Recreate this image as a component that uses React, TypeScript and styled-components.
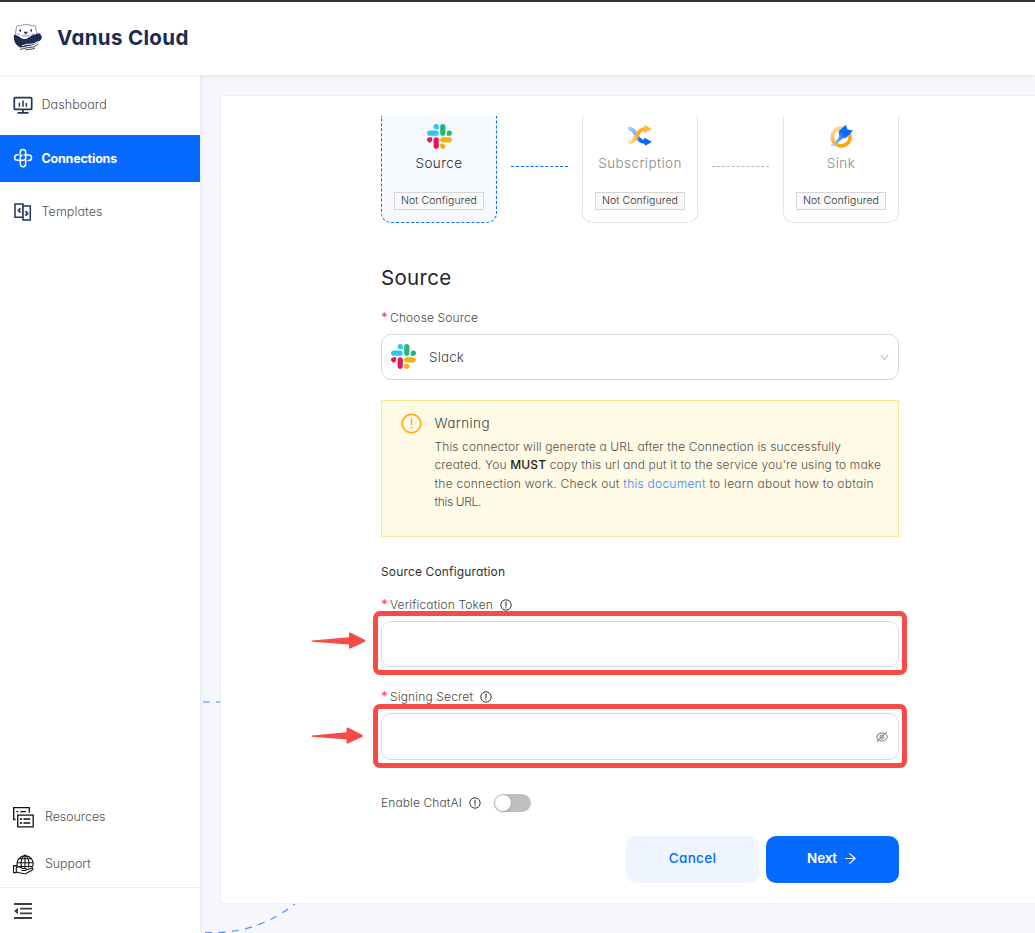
import React from 'react';
import styled, { createGlobalStyle, css } from 'styled-components';
import {
  AiOutlineArrowRight,
  AiOutlineDown,
  AiOutlineExclamationCircle,
  AiOutlineEyeInvisible,
} from 'react-icons/ai';

const GlobalStyle = createGlobalStyle`
  *, *::before, *::after { box-sizing: border-box; }
  html, body { margin: 0; height: 100%; }
  body {
    background: #f5f7fc;
    font-family: Inter, 'Open Sans', sans-serif;
    font-feature-settings: 'cv11', 'ss03';
    font-weight: 360;
    color: #4a4a4a;
    overflow: hidden;
  }
  button { font: inherit; font-feature-settings: inherit; }
  svg { display: block; flex: none; }
`;

const Page = styled.div`
  display: flex;
  flex-direction: column;
  height: 933px;
`;

const Header = styled.header`
  display: flex;
  align-items: center;
  gap: 14px;
  flex: none;
  height: 75px;
  padding: 0 0 2px 13px;
  border-top: 2px solid #343238;
  background: #fff;
  box-shadow: 0 1px 4px rgba(20, 40, 90, 0.09);
  z-index: 2;

  svg {
    margin-top: -1px;
  }
`;

const Brand = styled.h1`
  margin: 0;
  font-size: 20.5px;
  font-weight: 680;
  line-height: 30px;
  letter-spacing: 0.35px;
  color: #1b2c50;
`;

const Body = styled.div`
  display: flex;
  flex: 1;
  min-height: 0;
`;

const Sidebar = styled.nav`
  display: flex;
  flex-direction: column;
  flex: none;
  width: 200px;
  padding-top: 6px;
  background: #fff;
  box-shadow: 1px 0 4px rgba(20, 40, 90, 0.08);
  z-index: 1;
`;

const NavItem = styled.a<{ $active?: boolean; $footer?: boolean }>`
  display: flex;
  align-items: center;
  gap: ${(p) => (p.$footer ? 11 : 8.5)}px;
  height: 47px;
  padding-left: 13px;
  margin-bottom: ${(p) => (p.$footer ? 0 : p.$active ? 6 : 7)}px;
  font-size: 12.5px;
  letter-spacing: ${(p) => (p.$footer ? -0.08 : 0.08)}px;
  color: #505050;
  ${(p) =>
    p.$active &&
    css`
      padding-bottom: 1px;
      background: #076aff;
      color: #fff;
      font-weight: 700;
      letter-spacing: -0.2px;
    `}
  ${(p) =>
    p.$footer &&
    css`
      svg {
        margin-top: 2px;
      }
    `}
`;

const Spacer = styled.div`
  flex: 1;
`;

const Collapse = styled.div`
  display: flex;
  align-items: center;
  height: 46px;
  padding-left: 14px;
  border-top: 1px solid #ececee;
`;

const Main = styled.main`
  position: relative;
  flex: 1;
  padding: 20px 0 29px 20px;
  background: #f5f7fc;
`;

const Backdrop = styled.svg`
  position: absolute;
  left: 0;
  top: 0;
`;

const Panel = styled.section`
  position: relative;
  height: 809px;
  padding: 20px 0 0 160px;
  border: 1px solid #eeeff2;
  border-right: 0;
  background: #fff;
`;

const Form = styled.div`
  display: flex;
  flex-direction: column;
  width: 518px;
`;

const Steps = styled.div`
  display: flex;
  align-items: flex-start;
  justify-content: space-between;
`;

const StepCard = styled.div<{ $active?: boolean }>`
  display: flex;
  flex-direction: column;
  align-items: center;
  width: 116px;
  height: 107px;
  padding-top: 8px;
  border: 1px ${(p) => (p.$active ? 'dashed #076aff' : 'solid #e6e6e6')};
  border-top: 0;
  border-radius: 0 0 10px 10px;
  background: ${(p) => (p.$active ? '#f6faff' : '#fff')};
`;

const StepName = styled.div<{ $active?: boolean }>`
  margin-top: 4px;
  font-size: 13.5px;
  line-height: 20px;
  letter-spacing: 0.42px;
  color: ${(p) => (p.$active ? '#2b2b2b' : '#888')};
`;

const Tag = styled.div`
  margin-top: 19px;
  width: 90px;
  height: 18px;
  border: 1px solid #d6d6d6;
  background: #fafafa;
  font-size: 10.5px;
  line-height: 16px;
  letter-spacing: 0.08px;
  text-align: center;
  white-space: nowrap;
  color: #2e2e2e;
`;

const StepLink = styled.div<{ $active?: boolean }>`
  width: 57px;
  margin: 50px 1px 0 0;
  border-top: 1px dashed ${(p) => (p.$active ? '#076aff' : '#b5b5b5')};
`;

const Title = styled.h2`
  margin: 35px 0 0;
  font-size: 20.5px;
  font-weight: 400;
  line-height: 40px;
  letter-spacing: 0.3px;
  color: #262626;
`;

const FieldLabel = styled.label<{ $top: number; $spacing?: number }>`
  display: flex;
  align-items: center;
  height: 20px;
  padding-bottom: 2px;
  margin-top: ${(p) => p.$top}px;
  font-size: 12px;
  letter-spacing: ${(p) => p.$spacing ?? 0.15}px;
  color: #484848;

  svg {
    margin: 2px 0 0 7px;
  }
`;

const Required = styled.span`
  width: 9px;
  font-size: 13px;
  font-weight: 500;
  letter-spacing: 0;
  color: #ff4d4f;
`;

const Box = styled.div<{ $height?: number }>`
  position: relative;
  display: flex;
  align-items: center;
  height: ${(p) => p.$height ?? 46}px;
  margin-top: 6px;
  border: 1px solid #d9d9d9;
  border-radius: 10px;
  background: #fff;
`;

const Select = styled(Box)`
  padding: 0 8px 2px 9px;
  gap: 13px;
  font-size: 13.5px;
  letter-spacing: 0.12px;
  color: #404040;

  span {
    flex: 1;
    padding-top: 2px;
  }
  svg:last-child {
    margin-top: 2px;
  }
`;

const SecretBox = styled(Box)`
  justify-content: flex-end;
  padding: 0 9px 0 0;
  color: #7c7c7c;
`;

const Highlight = styled.div<{ $top: number }>`
  position: absolute;
  top: ${(p) => p.$top}px;
  left: -9px;
  width: 534px;
  height: 64px;
  border: 5px solid #f84a46;
  border-radius: 7px;
`;

const Arrow = styled.svg<{ $top: number }>`
  position: absolute;
  left: -71px;
  top: ${(p) => p.$top}px;
`;

const Alert = styled.div`
  display: flex;
  height: 137px;
  margin-top: 20px;
  padding: 11px 0 0 18px;
  gap: 11.5px;
  border: 1px solid #ffe58f;
  background: #fffae6;
`;

const AlertTitle = styled.div`
  font-size: 13.5px;
  line-height: 22px;
  letter-spacing: 0.4px;
  color: #403f3a;
`;

const AlertText = styled.div`
  margin-top: 4px;
  font-size: 12px;
  line-height: 18.4px;
  color: #54524c;
  white-space: nowrap;

  strong {
    font-weight: 450;
    color: #1f1e1b;
  }
  a {
    color: #1a8bff;
  }
`;

const Line = styled.div<{ $spacing: number }>`
  letter-spacing: ${(p) => p.$spacing}px;
`;

const SubTitle = styled.div`
  margin-top: 25px;
  font-size: 12px;
  font-weight: 400;
  line-height: 20px;
  letter-spacing: 0.15px;
  color: #303030;
`;

const Toggle = styled.span`
  width: 37px;
  height: 18px;
  margin: 2px 0 0 13px;
  padding: 1px;
  border-radius: 9px;
  background: #bfbfbf;

  &::after {
    content: '';
    display: block;
    width: 16px;
    height: 16px;
    border-radius: 50%;
    background: #fff;
    box-shadow: 0 1px 3px rgba(0, 0, 0, 0.2);
  }
`;

const Actions = styled.div`
  display: flex;
  justify-content: flex-end;
  gap: 7px;
  margin-top: 23px;
`;

const Button = styled.button<{ $primary?: boolean }>`
  display: flex;
  align-items: center;
  justify-content: center;
  gap: 6px;
  width: 133px;
  height: 47px;
  padding: 0 0 3px;
  border: 0;
  border-radius: 10px;
  background: ${(p) => (p.$primary ? '#076aff' : '#eef5ff')};
  color: ${(p) => (p.$primary ? '#fff' : '#076aff')};
  font-size: 13.5px;
  font-weight: ${(p) => (p.$primary ? 600 : 500)};
  letter-spacing: ${(p) => (p.$primary ? -0.2 : 0.3)}px;
`;

const OtterLogo = () => (
  <svg width="30" height="28" viewBox="0 0 30 28">
    <path d="M1.200 11.500C0 16 1.500 21.500 7 24.400c5 .6 12-1 18.300-5.700 2.200-1 3.700-2.700 3.500-4.600-.3-2.200-2.600-4.400-4.300-3.600L20 15H8Z" fill="#1b2c50" />
    <path d="M3.400 5.600C2.500 3.400 4.300 2 6.300 3c4.500-1.900 9.700-1.900 13.700 0 2-1 3.600.6 2.700 2.800 1.200 3.500 1.200 6.600-.6 9.200-4 3.700-14 3.700-18 0-1.900-2.800-1.900-6-.7-9.400Z" fill="#fff" stroke="#68758e" strokeWidth="0.8" />
    <path d="M10.700 8.700h4.200l-1 2h-2.200Z" fill="#1b2c50" />
    <ellipse cx="7.200" cy="7.500" rx="0.900" ry="1.200" fill="#1b2c50" />
    <ellipse cx="18.200" cy="7.500" rx="0.900" ry="1.200" fill="#1b2c50" />
    <path d="M12.800 10.500v1.700M8.500 12.300c2 1 6 1 8.200 0M4.500 11l2.500.4M18.500 11.300l2.500-.4" stroke="#68758e" strokeWidth="0.8" fill="none" />
    <path d="M1.500 12.500c1.500-.8 4.500.7 6.500 2.600 2 1.200 5 1.200 7-.1 2.500-2.200 6-3.700 9-4l2 4-6 5-16 1Z" fill="#1b2c50" />
    <path d="M9 22.800c3-.6 5-2 8-1.600 3 .4 6-1.600 8.500-2.900M8 25.300c4 .2 6-2.500 9.500-2 3 .3 5.500-1 7.500-2.700" stroke="#fff" strokeWidth="1" fill="none" />
    <path d="M7 26.300c4.500-.2 6.500-2.200 10-1.900 3.500 0 6-1.300 8.500-3.800M12.500 27c3.500-1.400 6.500 0 9.500-2" stroke="#1b2c50" strokeWidth="0.900" fill="none" />
  </svg>
);

const DashboardIcon = () => (
  <svg width="20" height="18" viewBox="0 0 20 18" fill="none" stroke="#22345a">
    <rect x="1.300" y="1.600" width="17.400" height="11.800" rx="1" strokeWidth="1.700" />
    <path d="M10 13.400v3M4.500 16.900h11" strokeWidth="1.600" />
    <path d="M6.400 6.700v4M10 4.500v6.200M13.400 7v3.700" strokeWidth="1.500" />
  </svg>
);

const ConnectionsIcon = () => (
  <svg width="20" height="20" viewBox="0 0 20 20" fill="none" stroke="#fff" strokeWidth="1.500">
    <path d="M7.300 8V4.200a2.700 2.700 0 0 1 5.400 0v5.900a2.200 2.200 0 0 1-2.200 2.200H4.400a2.750 2.750 0 0 1 0-5.500h1.300" />
    <path d="M12.700 11.800V16a2.700 2.700 0 0 1-5.400 0V9.500a2.200 2.200 0 0 1 2-2.200" />
    <path d="M10.500 6.900h5.300a2.750 2.750 0 0 1 0 5.500h-1.300" />
  </svg>
);

const TemplatesIcon = () => (
  <svg width="20" height="20" viewBox="0 0 20 20" fill="none" stroke="#22345a" strokeWidth="1.500">
    <path d="M10 15.300H2V2h8Z" />
    <path d="M10 3.900h7.300v14H10Z" fill="#fff" />
    <path d="M7.500 6.300 5.400 8.500l2.100 2.200M12.500 9.200l2.100 2.200-2.100 2.200" strokeWidth="1.700" />
  </svg>
);

const ResourcesIcon = () => (
  <svg width="21" height="21" viewBox="0 0 21 21" fill="none" stroke="#111">
    <path d="M2.500 12.500H.7V.7h15.600v5" strokeWidth="1.300" />
    <path d="M4.700 8.100h15.500v11.800H4.700Z" strokeWidth="1.300" />
    <path d="M3.300 4.600h2M7.300 4.600H13M6.800 12h2.400M10.500 12h6.700M6.800 16h2.400M10.500 16h6.700" strokeWidth="1.300" />
  </svg>
);

const SupportIcon = () => (
  <svg width="21" height="21" viewBox="0 0 21 21" fill="none" stroke="#111" strokeWidth="1.100">
    <path d="M4.600 12.500A8 8 0 1 1 19 13.800M12 1v13M4.200 8.700h15.900M5.600 4.800h13M6 12.500h13" />
    <path d="M8.800 13.500C7.200 9.500 8 3.200 12 1c4 2.200 4.800 8.500 3.200 12.500" />
    <path d="M.6 11.600h2.700v7H.6ZM3.300 13.200c3-1 4.500.1 6 1.300h3c1.500.2 1.500 1.900 0 2H8.500M12.800 16l5.500-1.700c1.600-.2 2.200 1 1 1.800L13 19.500c-2.500 1-5-.7-9.700-1.500" fill="#fff" />
  </svg>
);

const CollapseIcon = () => (
  <svg width="18" height="16" viewBox="0 0 18 16" fill="#3d3d3d">
    <path d="M0 0h18v1.900H0zM6 4.700h12v1.900H6zM6 9.400h12v1.900H6zM0 14.100h18V16H0zM0 8l4-3.200v6.400z" />
  </svg>
);

const SlackLogo = () => (
  <svg width="25" height="25" viewBox="0 0 122.8 122.8">
    <path fill="#e4175b" d="M25.800 77.600c0 7.100-5.800 12.900-12.900 12.900S0 84.700 0 77.600s5.800-12.900 12.900-12.900h12.900v12.900zM32.300 77.600c0-7.100 5.800-12.900 12.900-12.900s12.900 5.800 12.900 12.900v32.300c0 7.100-5.800 12.900-12.900 12.900s-12.900-5.800-12.900-12.900V77.600z" />
    <path fill="#2fc6f5" d="M45.200 25.800c-7.100 0-12.900-5.800-12.900-12.900S38.100 0 45.200 0s12.900 5.800 12.900 12.900v12.900H45.200zM45.200 32.300c7.100 0 12.900 5.800 12.900 12.900s-5.800 12.900-12.900 12.900H12.900C5.800 58.100 0 52.300 0 45.200s5.800-12.900 12.900-12.900h32.300z" />
    <path fill="#23b67c" d="M97 45.200c0-7.100 5.800-12.900 12.900-12.900s12.900 5.800 12.900 12.900-5.800 12.900-12.900 12.900H97V45.200zM90.500 45.200c0 7.100-5.800 12.900-12.900 12.900s-12.900-5.800-12.900-12.900V12.900C64.700 5.800 70.500 0 77.600 0s12.900 5.800 12.900 12.900v32.300z" />
    <path fill="#eeb211" d="M77.600 97c7.100 0 12.900 5.800 12.900 12.900s-5.800 12.900-12.900 12.900-12.900-5.800-12.900-12.900V97h12.900zM77.600 90.500c-7.100 0-12.900-5.800-12.900-12.900s5.800-12.900 12.900-12.900h32.300c7.100 0 12.900 5.800 12.900 12.900s-5.800 12.900-12.900 12.900H77.600z" />
  </svg>
);

const ShuffleIcon = () => (
  <svg width="26" height="25" viewBox="0 0 26 25" fill="none">
    <defs>
      <linearGradient id="blue" x1="1" y1="4" x2="19" y2="18" gradientUnits="userSpaceOnUse">
        <stop stopColor="#a9cbff" />
        <stop offset="0.45" stopColor="#7baeff" />
        <stop offset="0.8" stopColor="#076aff" />
      </linearGradient>
      <linearGradient id="amber" x1="1" y1="19" x2="20" y2="4" gradientUnits="userSpaceOnUse">
        <stop stopColor="#ffe6b0" />
        <stop offset="0.55" stopColor="#ffa910" />
        <stop offset="1" stopColor="#ffb83f" />
      </linearGradient>
    </defs>
    <path d="M1.300 4.500c9 0 7 13.500 17 13.500" stroke="url(#blue)" strokeWidth="4" />
    <path d="m17 13.500 8 4.200-7 4.300Z" fill="#076aff" />
    <path d="M1.300 18.500c10 0 7-13.500 17-13.500" stroke="url(#amber)" strokeWidth="4" />
    <path d="m17.500.8 7.500 4.100-7.500 4.300Z" fill="#ffb83f" />
  </svg>
);

const SinkIcon = () => (
  <svg width="25" height="25" viewBox="0 0 25 25" fill="none">
    <defs>
      <linearGradient id="ring" x1="5" y1="3" x2="18" y2="22" gradientUnits="userSpaceOnUse">
        <stop stopColor="#ffe0a0" />
        <stop offset="0.6" stopColor="#ffaf1c" />
        <stop offset="1" stopColor="#ff9f00" />
      </linearGradient>
      <linearGradient id="bolt" x1="3" y1="22" x2="15" y2="9" gradientUnits="userSpaceOnUse">
        <stop stopColor="#b5d2ff" />
        <stop offset="1" stopColor="#076aff" />
      </linearGradient>
    </defs>
    <circle cx="12.200" cy="13" r="8.900" stroke="url(#ring)" strokeWidth="3.600" />
    <path d="m2 20.300 2 .1L10.200 13l-.6-5.700L17 .8l1.200 5 5.800.5-6.300 7.300-4 .9L5.700 21.300l-.5 1.500-1.200-1-2 1Z" fill="url(#bolt)" />
  </svg>
);

const HintIcon = () => (
  <svg width="12" height="12" viewBox="0 0 12 12" fill="none" stroke="#1f1f1f">
    <circle cx="6" cy="6" r="5.200" strokeWidth="0.900" />
    <path d="M6 2.700v4.800M6 8.300v1" strokeWidth="1" />
  </svg>
);

const PointerArrow = ({ length, top }: { length: number; top: number }) => (
  <Arrow $top={top} width="56" height="20" viewBox="0 0 56 20">
    <path
      d={`M1 9.600 ${length - 16.5} 6.300V2.600q.2-1.800 1.800-.9L${length - 0.5} 9q1 1 0 1.800l-14.600 6.700q-1.400.6-1.400-.9v-3.200L1 10.800Q0 10 1 9.600Z`}
      fill="#f84a46"
    />
  </Arrow>
);

export default function App() {
  return (
    <Page>
      <GlobalStyle />
      <Header>
        <OtterLogo />
        <Brand>Vanus Cloud</Brand>
      </Header>
      <Body>
        <Sidebar>
          <NavItem><DashboardIcon />Dashboard</NavItem>
          <NavItem $active><ConnectionsIcon />Connections</NavItem>
          <NavItem><TemplatesIcon />Templates</NavItem>
          <Spacer />
          <NavItem $footer><ResourcesIcon />Resources</NavItem>
          <NavItem $footer><SupportIcon />Support</NavItem>
          <Collapse><CollapseIcon /></Collapse>
        </Sidebar>
        <Main>
          <Backdrop width="835" height="858" fill="none" stroke="#4a90ff" strokeWidth="1.2">
            <path d="M3 627H20" strokeDasharray="7 6" />
            <path d="M5 857.500C38 859 66 851 95 829" strokeDasharray="7 6.5" />
          </Backdrop>
          <Panel>
            <Form>
              <Steps>
                <StepCard $active>
                  <SlackLogo />
                  <StepName $active>Source</StepName>
                  <Tag>Not Configured</Tag>
                </StepCard>
                <StepLink $active />
                <StepCard>
                  <ShuffleIcon />
                  <StepName>Subscription</StepName>
                  <Tag>Not Configured</Tag>
                </StepCard>
                <StepLink />
                <StepCard>
                  <SinkIcon />
                  <StepName>Sink</StepName>
                  <Tag>Not Configured</Tag>
                </StepCard>
              </Steps>

              <Title>Source</Title>
              <FieldLabel $top={10}><Required>*</Required>Choose Source</FieldLabel>
              <Select>
                <SlackLogo />
                <span>Slack</span>
                <AiOutlineDown size={11} color="#b3b3b3" />
              </Select>

              <Alert>
                <AiOutlineExclamationCircle size={23} color="#faad14" />
                <div>
                  <AlertTitle>Warning</AlertTitle>
                  <AlertText>
                    <Line $spacing={0.11}>This connector will generate a URL after the Connection is successfully</Line>
                    <Line $spacing={0.13}>created. You <strong>MUST</strong> copy this url and put it to the service you're using to make</Line>
                    <Line $spacing={0.25}>the connection work. Check out <a>this document</a> to learn about how to obtain</Line>
                    <Line $spacing={-0.35}>this URL.</Line>
                  </AlertText>
                </div>
              </Alert>

              <SubTitle>Source Configuration</SubTitle>
              <FieldLabel $top={13}><Required>*</Required>Verification Token<HintIcon /></FieldLabel>
              <Box>
                <Highlight $top={-11} />
                <PointerArrow length={54.5} top={9} />
              </Box>
              <FieldLabel $top={20}><Required>*</Required>Signing Secret<HintIcon /></FieldLabel>
              <SecretBox $height={47}>
                <AiOutlineEyeInvisible size={14} />
                <Highlight $top={-10} />
                <PointerArrow length={52} top={12} />
              </SecretBox>

              <FieldLabel $top={33} $spacing={0.1}>Enable ChatAI<HintIcon /><Toggle /></FieldLabel>
              <Actions>
                <Button>Cancel</Button>
                <Button $primary>Next<AiOutlineArrowRight size={15} /></Button>
              </Actions>
            </Form>
          </Panel>
        </Main>
      </Body>
    </Page>
  );
}
